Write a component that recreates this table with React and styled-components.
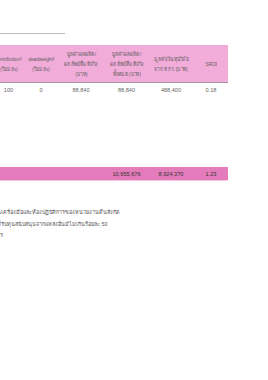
import React from "react";
import styled, { createGlobalStyle } from "styled-components";

const GlobalStyle = createGlobalStyle`
	html, body {
		margin: 0;
		padding: 0;
		background: #fff;
		overflow: hidden;
	}
	body {
		font-family: "Liberation Sans", "Noto Sans", "DejaVu Sans", sans-serif;
		color: #5a5a5a;
	}
`;

const columns = "33px 32px 48px 43px 46px 34px";

const header = [
	["contribution²", "(ร้อยละ)"],
	["deadweight³", "(ร้อยละ)"],
	["มูลค่าผลผลิต/", "ผลลัพธ์ที่แท้จริง", "(บาท)"],
	["มูลค่าผลผลิต/", "ผลลัพธ์ที่แท้จริง", "ทั้งหมด (บาท)"],
	["มูลค่าเงินทุนวิจัย", "จาก สกว. (บาท)"],
	["SROI"],
];

const dataRow = ["100", "0", "88,840", "88,840", "488,400", "0.18"];
const totalRow = ["", "", "", "10,955,676", "8,924,370", "1.23"];

const notes = [
	"นเครื่องมือและห้องปฏิบัติการของหน่วยงานต้นสังกัด",
	"ที่รับทุนสนับสนุนจากแหล่งอื่นมีไม่เกินร้อยละ 50",
	"าร",
];

const App = () => {
	return (
		<Page>
			<GlobalStyle />
			<Sheet>
				<Rule />
				<HeaderRow>
					{header.map((lines, i) => (
						<Cell key={i}>
							{lines.map((l, j) => (
								<HeadLine key={j}>{l}</HeadLine>
							))}
						</Cell>
					))}
				</HeaderRow>
				<DataRow>
					{dataRow.map((v, i) => (
						<Cell key={i}>{v}</Cell>
					))}
				</DataRow>
				<TotalRow>
					{totalRow.map((v, i) => (
						<Cell key={i}>{v}</Cell>
					))}
				</TotalRow>
				<Notes>
					{notes.map((n, i) => (
						<Note key={i}>{n}</Note>
					))}
				</Notes>
			</Sheet>
		</Page>
	);
};

const Page = styled.div`
	width: 268px;
	height: 380px;
	overflow: hidden;
`;

const Sheet = styled.div`
	margin-left: -8px;
	padding-top: 33px;
`;

const Rule = styled.div`
	width: 73px;
	height: 1px;
	background: #b9b9b9;
	margin-bottom: 11px;
`;

const Row = styled.div`
	display: grid;
	grid-template-columns: ${columns};
	width: 236px;
	font-size: 5.6px;
	white-space: nowrap;
`;

const HeaderRow = styled(Row)`
	height: 37px;
	background: #f1acd9;
	border-bottom: 1px solid #a893a3;
	color: #5c5c5c;
	font-size: 6px;
`;

const DataRow = styled(Row)`
	height: 13px;
	color: #666;
`;

const TotalRow = styled(Row)`
	margin-top: 71px;
	height: 13px;
	background: #e47cbb;
	color: #333;
	border-bottom: 1px solid #f3c8e2;
`;

const Cell = styled.div`
	display: flex;
	flex-direction: column;
	align-items: center;
	justify-content: center;
	line-height: 10px;
`;

const HeadLine = styled.span`
	display: block;
	transform: scaleX(0.8);
`;

const Notes = styled.div`
	margin-top: 26px;
	margin-left: 5px;
	font-size: 5.4px;
	line-height: 11.5px;
	color: #555;
`;

const Note = styled.div`
	white-space: nowrap;
`;

export default App;
